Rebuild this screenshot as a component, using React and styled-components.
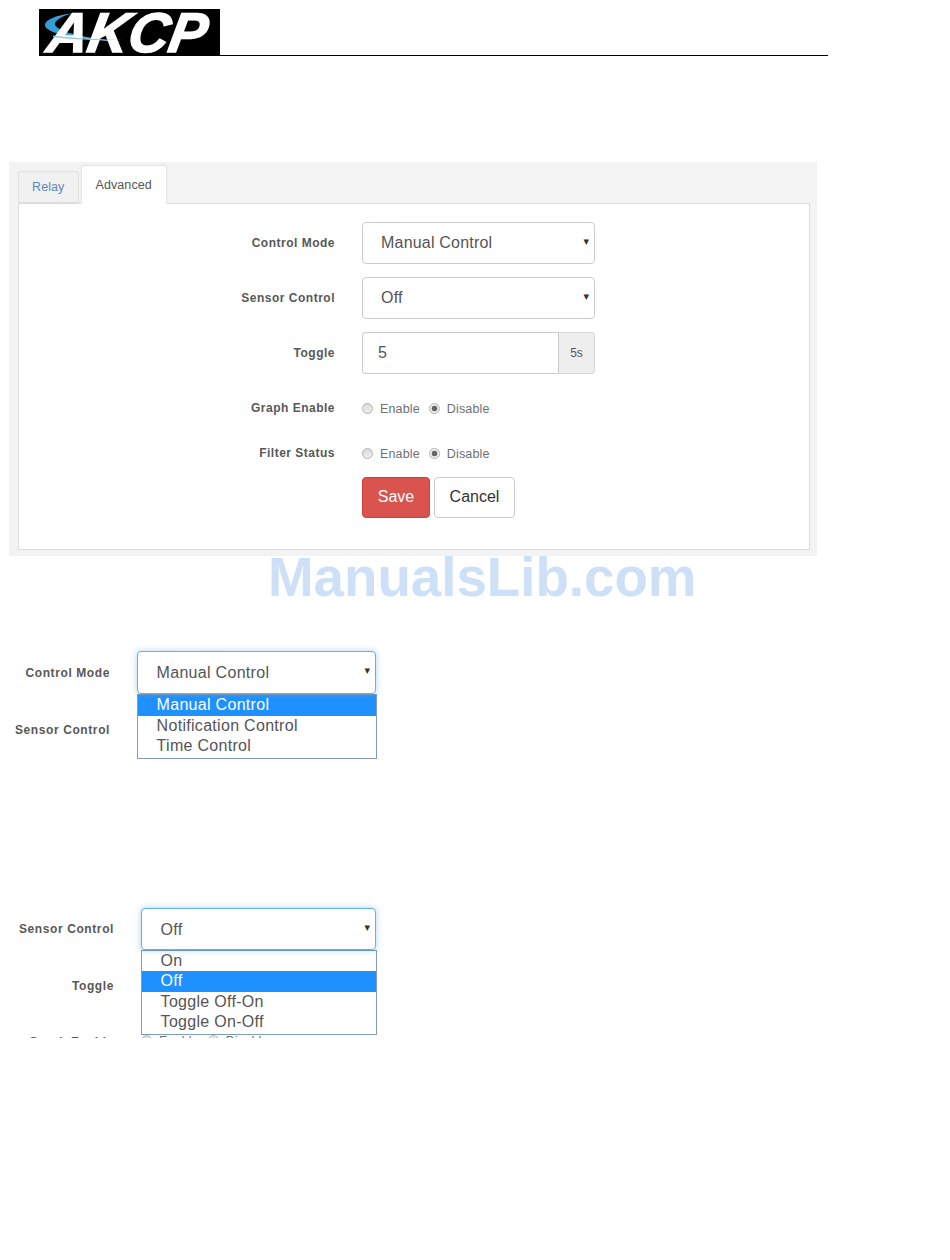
import React from 'react';
import styled, { createGlobalStyle } from 'styled-components';

const Global = createGlobalStyle`
  html, body {
    margin: 0;
    padding: 0;
    background: #fff;
    font-family: "Liberation Sans", Arial, sans-serif;
  }
`;

function Field({ label, children, $top }) {
  return (
    <Row $top={$top}>
      <Label>{label}</Label>
      {children}
    </Row>
  );
}

function Radios() {
  return (
    <RadioGroup>
      <Radio />
      <RadioText>Enable</RadioText>
      <Radio $on />
      <RadioText>Disable</RadioText>
    </RadioGroup>
  );
}

function DropdownDemo({ label, value, next, options, active, $labelWidth, $selectWidth, $selectHeight, $top, children }) {
  return (
    <Demo $top={$top}>
      <DemoRow $labelWidth={$labelWidth}>
        <DemoLabel>{label}</DemoLabel>
        <FocusSelect $width={$selectWidth} $height={$selectHeight}>
          {value}
          <Caret>▾</Caret>
        </FocusSelect>
      </DemoRow>
      <DemoBody $labelWidth={$labelWidth}>
        <NextLabel>{next}</NextLabel>
        <List $width={$selectWidth + 1}>
          {options.map((o) => (
            <Option key={o} $active={o === active}>{o}</Option>
          ))}
        </List>
      </DemoBody>
      {children}
    </Demo>
  );
}

export default function App() {
  return (
    <Page>
      <Global />
      <Header>
        <Logo>
          <Swoosh viewBox="0 0 100 34" aria-hidden="true">
            <defs>
              <linearGradient id="swoosh" x1="0" x2="1" y1="0" y2="0">
                <stop offset="0" stopColor="#2f9bd8" />
                <stop offset="0.45" stopColor="#3fa5dd" />
                <stop offset="1" stopColor="#bcdcf0" />
              </linearGradient>
            </defs>
            <path d="M30 1 C12 3 1 8 1 13 C1 21 30 28 78 29.5 C44 27 14 20 11 13 C10 9 17 4 30 1 Z" fill="url(#swoosh)" />
          </Swoosh>
          <LogoText>AKCP</LogoText>
          <SwooshTail viewBox="0 0 70 6" aria-hidden="true">
            <path d="M0 0.5 C20 3 45 4.6 70 5 C45 5.4 20 4.5 0 2 Z" fill="#8cc6e8" />
          </SwooshTail>
        </Logo>
        <HeaderRule />
      </Header>

      <Panel>
        <Tabs>
          <Tab>Relay</Tab>
          <Tab $active>Advanced</Tab>
        </Tabs>
        <Box>
          <Field label="Control Mode">
            <Select>Manual Control<Caret>▾</Caret></Select>
          </Field>
          <Field label="Sensor Control" $top={13}>
            <Select>Off<Caret>▾</Caret></Select>
          </Field>
          <Field label="Toggle" $top={13}>
            <InputGroup>
              <Input>5</Input>
              <Addon>5s</Addon>
            </InputGroup>
          </Field>
          <Field label="Graph Enable" $top={24}>
            <Radios />
          </Field>
          <Field label="Filter Status" $top={25}>
            <Radios />
          </Field>
          <Field $top={14}>
            <Buttons>
              <SaveButton>Save</SaveButton>
              <CancelButton>Cancel</CancelButton>
            </Buttons>
          </Field>
        </Box>
      </Panel>

      <Watermark>ManualsLib.com</Watermark>

      <DropdownDemo
        $top={95}
        $labelWidth={137}
        $selectWidth={239}
        $selectHeight={43}
        label="Control Mode"
        next="Sensor Control"
        value="Manual Control"
        active="Manual Control"
        options={['Manual Control', 'Notification Control', 'Time Control']}
      />

      <DropdownDemo
        $top={149}
        $labelWidth={141}
        $selectWidth={235}
        $selectHeight={42}
        label="Sensor Control"
        next="Toggle"
        value="Off"
        active="Off"
        options={['On', 'Off', 'Toggle Off-On', 'Toggle On-Off']}
      >
        <Clipped>
          <ClippedLabel>Graph Enable</ClippedLabel>
          <Radio />
          <ClippedText>Enable</ClippedText>
          <Radio $on />
          <ClippedText>Disable</ClippedText>
        </Clipped>
      </DropdownDemo>
    </Page>
  );
}

const Page = styled.div`
  position: relative;
  width: 950px;
  height: 1260px;
  overflow: hidden;
  padding-top: 9px;
  box-sizing: border-box;
`;

const Header = styled.header`
  display: flex;
  align-items: flex-end;
  margin-left: 39px;
  width: 789px;
`;

const Logo = styled.div`
  position: relative;
  width: 181px;
  height: 47px;
  background: #000;
  flex: none;
`;

const Swoosh = styled.svg`
  position: absolute;
  left: 5px;
  top: 3px;
  width: 100px;
  height: 34px;
`;

const SwooshTail = styled.svg`
  position: absolute;
  left: 14px;
  top: 26px;
  width: 70px;
  height: 6px;
`;

const LogoText = styled.div`
  position: absolute;
  left: 6px;
  top: -7px;
  font-size: 56px;
  line-height: 62px;
  font-weight: 700;
  font-style: italic;
  color: #fff;
  -webkit-text-stroke: 1.5px #fff;
  transform-origin: 0 51px;
  transform: skewX(-10deg);
`;

const HeaderRule = styled.div`
  flex: 1;
  height: 1px;
  background: #000;
`;

const Panel = styled.section`
  width: 808px;
  height: 394px;
  margin: 106px 0 0 9px;
  background: #f3f3f3;
  box-sizing: border-box;
  padding: 3px 7px 6px 9px;
`;

const Tabs = styled.div`
  display: flex;
  align-items: flex-end;
  gap: 2px;
  height: 38px;
  position: relative;
  z-index: 1;
`;

const Tab = styled.div`
  box-sizing: border-box;
  height: ${(p) => (p.$active ? 39 : 32)}px;
  margin-bottom: ${(p) => (p.$active ? -1 : 0)}px;
  padding: ${(p) => (p.$active ? '11px 14px 0 13px' : '7px 14px 0 13px')};
  font-size: 12.5px;
  letter-spacing: 0.1px;
  line-height: 16px;
  color: ${(p) => (p.$active ? '#555' : '#5a8ab8')};
  background: ${(p) => (p.$active ? '#fff' : '#f1f1f1')};
  border: 1px solid #e2e2e2;
  border-bottom: ${(p) => (p.$active ? '0' : '1px solid #ddd')};
  border-radius: 3px 3px 0 0;
`;

const Box = styled.div`
  height: 347px;
  box-sizing: border-box;
  background: #fff;
  border: 1px solid #dedede;
  padding-top: 18px;
`;

const Row = styled.div`
  display: flex;
  align-items: center;
  margin-top: ${(p) => p.$top || 0}px;
`;

const Label = styled.div`
  width: 316px;
  margin-right: 27px;
  flex: none;
  text-align: right;
  font-size: 12px;
  font-weight: 700;
  letter-spacing: 0.5px;
  color: #585858;
`;

const Select = styled.div`
  position: relative;
  box-sizing: border-box;
  width: 233px;
  height: 42px;
  padding-left: 18px;
  border: 1px solid #ccc;
  border-radius: 4px;
  background: #fff;
  font-size: 16px;
  line-height: 39px;
  letter-spacing: 0.2px;
  color: #555;
`;

const Caret = styled.span`
  position: absolute;
  right: 5px;
  top: 0;
  font-family: "DejaVu Sans", sans-serif;
  font-size: 11px;
  line-height: 38px;
  letter-spacing: 0;
  color: #333;
`;

const InputGroup = styled.div`
  display: flex;
  width: 233px;
  height: 42px;
`;

const Input = styled.div`
  flex: 1;
  box-sizing: border-box;
  padding-left: 15px;
  border: 1px solid #ccc;
  border-right: 0;
  border-radius: 4px 0 0 4px;
  font-size: 16px;
  line-height: 39px;
  color: #555;
`;

const Addon = styled.div`
  width: 37px;
  box-sizing: border-box;
  text-align: center;
  background: #eee;
  border: 1px solid #d8d8d8;
  border-left-color: #ccc;
  border-radius: 0 4px 4px 0;
  font-size: 12px;
  line-height: 40px;
  color: #555;
`;

const RadioGroup = styled.div`
  display: flex;
  align-items: center;
  height: 20px;
`;

const Radio = styled.span`
  box-sizing: border-box;
  width: 11px;
  height: 11px;
  flex: none;
  border-radius: 50%;
  border: 1px solid #b4b4b4;
  background: ${(p) =>
    p.$on
      ? 'radial-gradient(circle, #666 0 2.5px, #eee 3.2px)'
      : 'linear-gradient(#dcdcdc, #eee)'};
`;

const RadioText = styled.span`
  margin: 1px 9px 0 7px;
  font-size: 12.5px;
  letter-spacing: 0.15px;
  color: #707070;
`;

const ClippedText = styled(RadioText)`
  margin-top: -1px;
`;

const Buttons = styled.div`
  display: flex;
  gap: 4px;
`;

const SaveButton = styled.div`
  box-sizing: border-box;
  width: 68px;
  height: 41px;
  text-align: center;
  font-size: 16px;
  line-height: 37px;
  color: #fff;
  background: #d9534f;
  border: 1px solid #d43f3a;
  border-radius: 4px;
`;

const CancelButton = styled.div`
  box-sizing: border-box;
  width: 81px;
  height: 41px;
  text-align: center;
  font-size: 16px;
  line-height: 37px;
  color: #333;
  background: #fff;
  border: 1px solid #ccc;
  border-radius: 4px;
`;

const Watermark = styled.div`
  position: absolute;
  left: 268px;
  top: 544px;
  font-size: 54.7px;
  line-height: 66px;
  font-weight: 700;
  color: #cde0f8;
  white-space: nowrap;
`;

const Demo = styled.section`
  margin-top: ${(p) => p.$top}px;
  width: 380px;
`;

const DemoRow = styled.div`
  display: grid;
  grid-template-columns: ${(p) => p.$labelWidth}px 1fr;
  align-items: center;
`;

const DemoLabel = styled.div`
  padding-right: 27px;
  text-align: right;
  font-size: 12px;
  font-weight: 700;
  letter-spacing: 0.6px;
  color: #585858;
`;

const FocusSelect = styled(Select)`
  width: ${(p) => p.$width}px;
  height: ${(p) => p.$height}px;
  padding-left: 18.6px;
  line-height: 41px;
  letter-spacing: 0.3px;
  border-color: #66afe9;
  box-shadow: 0 0 6px rgba(102, 175, 233, 0.55);
`;

const DemoBody = styled.div`
  display: grid;
  grid-template-columns: ${(p) => p.$labelWidth}px 1fr;
`;

const NextLabel = styled(DemoLabel)`
  padding-top: 29px;
`;

const List = styled.div`
  box-sizing: border-box;
  width: ${(p) => p.$width}px;
  border: 1px solid #7f9db9;
  border-top-color: #6f8fb0;
  padding-bottom: 1px;
  background: #fff;
`;

const Option = styled.div`
  height: 20.5px;
  padding-left: 18.6px;
  font-size: 16px;
  line-height: 19px;
  letter-spacing: 0.3px;
  color: ${(p) => (p.$active ? '#fff' : '#555')};
  background: ${(p) => (p.$active ? '#1e90ff' : 'transparent')};
`;

const Clipped = styled.div`
  display: flex;
  align-items: flex-start;
  height: 3px;
  overflow: hidden;
`;

const ClippedLabel = styled(DemoLabel)`
  width: 141px;
  flex: none;
  box-sizing: border-box;
  white-space: nowrap;
`;
